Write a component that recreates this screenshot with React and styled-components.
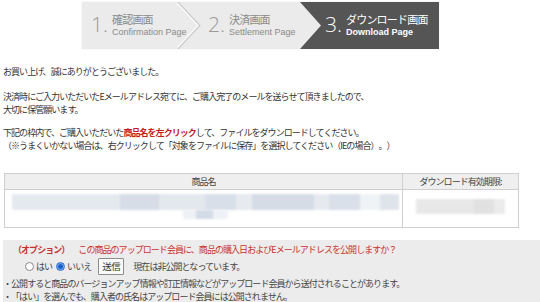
import styled, { createGlobalStyle } from "styled-components";

const GlobalStyle = createGlobalStyle`
  body {
    margin: 0;
    background: #fff;
    font-family: "Noto Sans CJK JP", "Noto Sans", sans-serif;
    color: #333;
  }
`;

const Page = styled.div`
  width: 540px;
  height: 302px;
  overflow: hidden;
  padding: 2px 0 0 3px;
  box-sizing: border-box;
  font-size: 9px;
  letter-spacing: -0.95px;
  text-spacing-trim: space-all;
`;

const StepBar = styled.div`
  display: flex;
  width: 357px;
  height: 47px;
  margin-left: 79px;
  background: #ebebeb;
  box-shadow: 0 0 1px rgba(0, 0, 0, 0.15);
  letter-spacing: 0;
  white-space: nowrap;
`;

const Step = styled.div`
  position: relative;
  display: flex;
  align-items: center;
  width: ${(p) => p.$width}px;
  padding-left: ${(p) => p.$pad}px;
  box-sizing: border-box;
  color: ${(p) => (p.$active ? "#fff" : "#8a8a8a")};
  background: ${(p) => (p.$active ? "#555" : "transparent")};
  clip-path: ${(p) =>
    p.$active ? "polygon(0 0, 100% 0, 100% 100%, 0 100%, 21px 50%)" : "none"};
`;

const StepNum = styled.span`
  font-family: "Open Sans", "Liberation Sans", sans-serif;
  font-weight: 300;
  font-size: 21px;
  line-height: 1;
  margin: 0 4px 3px 0;
  color: ${(p) => (p.$active ? "#fff" : "#999")};
`;

const StepText = styled.div`
  display: flex;
  flex-direction: column;
  gap: 2px;
  line-height: 11px;
`;

const StepJa = styled.span`
  font-size: 11px;
  letter-spacing: -0.8px;
`;

const StepEn = styled.span`
  font-family: "Liberation Sans", Arial, sans-serif;
  font-size: 9px;
  font-weight: ${(p) => (p.$active ? "bold" : "normal")};
`;

const Chevron = styled.svg`
  position: absolute;
  right: -23px;
  top: 0;
  z-index: 1;
`;

const Para = styled.p`
  margin: ${(p) => p.$top}px 0 0;
  line-height: 13.5px;
  color: #333;
`;

const Em = styled.span`
  color: #c41a1a;
  font-weight: bold;
`;

const Table = styled.div`
  margin: 20px 0 0 1px;
  width: 513px;
  border: 1px solid #cfcfcf;
  display: grid;
  grid-template-columns: 398px 1fr;
`;

const HeadCell = styled.div`
  height: 15px;
  line-height: 15px;
  text-align: center;
  background: #efefef;
  border-bottom: 1px solid #cfcfcf;
  border-right: ${(p) => (p.$last ? "none" : "1px solid #cfcfcf")};
  color: #444;
`;

const BodyCell = styled.div`
  height: 33px;
  border-right: ${(p) => (p.$last ? "none" : "1px solid #cfcfcf")};
  display: flex;
  flex-direction: column;
  align-items: ${(p) => (p.$last ? "center" : "flex-start")};
  justify-content: ${(p) => (p.$last ? "center" : "flex-start")};
  padding: ${(p) => (p.$last ? "0" : "4px 0 0 7px")};
`;

const BlurBar = styled.div`
  width: ${(p) => p.$w}px;
  height: ${(p) => p.$h}px;
  margin-left: ${(p) => p.$ml || 0}px;
  background: ${(p) => p.$bg};
  filter: blur(1px);
`;

const OptionBox = styled.div`
  margin-top: 12px;
  height: 64px;
  background: #ececec;
  padding: 3px 0 0 0;
  box-sizing: border-box;
  line-height: 13px;
`;

const Notice = styled.div`
  color: #c8322d;
  padding-left: 10px;
`;

const NoticeLabel = styled.span`
  font-weight: bold;
  margin-right: 9px;
`;

const RadioRow = styled.div`
  display: flex;
  align-items: center;
  height: 19px;
  padding-left: 22px;
  margin-top: 1px;
  color: #444;
`;

const Radio = styled.span`
  width: 9px;
  height: 9px;
  border-radius: 50%;
  box-sizing: border-box;
  margin-right: 2px;
  border: 1px solid ${(p) => (p.$checked ? "#2f6fd0" : "#888")};
  background: ${(p) =>
    p.$checked
      ? "radial-gradient(circle, #1b5cc4 0 2px, #6aa2ec 2.5px)"
      : "#fff"};
`;

const RadioLabel = styled.span`
  margin-right: 4px;
`;

const SendButton = styled.button`
  font: inherit;
  font-size: 9.5px;
  letter-spacing: -0.5px;
  color: #333;
  background: #fafafa;
  border: 1px solid #8c8c8c;
  border-radius: 1px;
  height: 17px;
  padding: 0 3px;
  margin: 0 9px 0 3px;
  line-height: 15px;
`;

const Bullet = styled.div`
  color: #444;
  margin-top: ${(p) => p.$top || 0}px;
`;

const stripe = (stops) =>
  `linear-gradient(90deg, ${stops
    .map(([c, a, b]) => `${c} ${a}%, ${c} ${b}%`)
    .join(", ")})`;

const titleBlur = stripe([
  ["#e4e9ef", 0, 28],
  ["#d6dde6", 28, 38],
  ["#e3e8ee", 38, 50],
  ["#d8dfe8", 50, 58],
  ["#e7ebf0", 58, 62],
  ["#d5dce6", 62, 78],
  ["#e6eaf0", 78, 82],
  ["#d9e0e9", 82, 90],
  ["#f0f3f6", 90, 95],
  ["#dfe4eb", 95, 100],
]);

const titleBlur2 = stripe([
  ["#eef1f5", 0, 30],
  ["#d3dbe6", 30, 66],
  ["#eef1f5", 66, 100],
]);

const dateBlur = stripe([
  ["#e8e8e8", 0, 65],
  ["#e1e1e1", 65, 88],
  ["#ebebeb", 88, 100],
]);

export default function App() {
  return (
    <>
      <GlobalStyle />
      <Page>
        <StepBar>
          <Step $width={96} $pad={9}>
            <StepNum>1.</StepNum>
            <StepText>
              <StepJa>確認画面</StepJa>
              <StepEn>Confirmation Page</StepEn>
            </StepText>
            <Chevron width="24" height="47" viewBox="0 0 24 47">
              <polyline
                points="0,0 22,23.5 0,47"
                fill="none"
                stroke="#c9c9c9"
                strokeWidth="2.5"
              />
              <polyline
                points="-1,0 21,23.5 -1,47"
                fill="none"
                stroke="#fafafa"
                strokeWidth="1.5"
              />
            </Chevron>
          </Step>
          <Step $width={122} $pad={30}>
            <StepNum>2.</StepNum>
            <StepText>
              <StepJa>決済画面</StepJa>
              <StepEn>Settlement Page</StepEn>
            </StepText>
          </Step>
          <Step $width={139} $pad={25} $active>
            <StepNum $active>3.</StepNum>
            <StepText>
              <StepJa>ダウンロード画面</StepJa>
              <StepEn $active>Download Page</StepEn>
            </StepText>
          </Step>
        </StepBar>

        <Para $top={16}>お買い上げ、誠にありがとうございました。</Para>
        <Para $top={11}>
          決済時にご入力いただいたEメールアドレス宛てに、ご購入完了のメールを送らせて頂きましたので、
          <br />
          大切に保管願います。
        </Para>
        <Para $top={9}>
          下記の枠内で、ご購入いただいた<Em>商品名を左クリック</Em>
          して、ファイルをダウンロードしてください。
          <br />
          （※うまくいかない場合は、右クリックして「対象をファイルに保存」を選択してください（IEの場合）。）
        </Para>

        <Table>
          <HeadCell>商品名</HeadCell>
          <HeadCell $last>ダウンロード有効期限:</HeadCell>
          <BodyCell>
            <BlurBar $w={387} $h={16} $bg={titleBlur} />
            <BlurBar $w={45} $h={9} $ml={171} $bg={titleBlur2} />
          </BodyCell>
          <BodyCell $last>
            <BlurBar $w={89} $h={15} $bg={dateBlur} />
          </BodyCell>
        </Table>

        <OptionBox>
          <Notice>
            <NoticeLabel>（オプション）</NoticeLabel>
            この商品のアップロード会員に、商品の購入日およびEメールアドレスを公開しますか？
          </Notice>
          <RadioRow>
            <Radio />
            <RadioLabel>はい</RadioLabel>
            <Radio $checked />
            <RadioLabel>いいえ</RadioLabel>
            <SendButton>送信</SendButton>
            現在は非公開となっています。
          </RadioRow>
          <Bullet $top={1}>
            ・公開すると商品のバージョンアップ情報や訂正情報などがアップロード会員から送付されることがあります。
          </Bullet>
          <Bullet>・「はい」を選んでも、購入者の氏名はアップロード会員には公開されません。</Bullet>
        </OptionBox>
      </Page>
    </>
  );
}
